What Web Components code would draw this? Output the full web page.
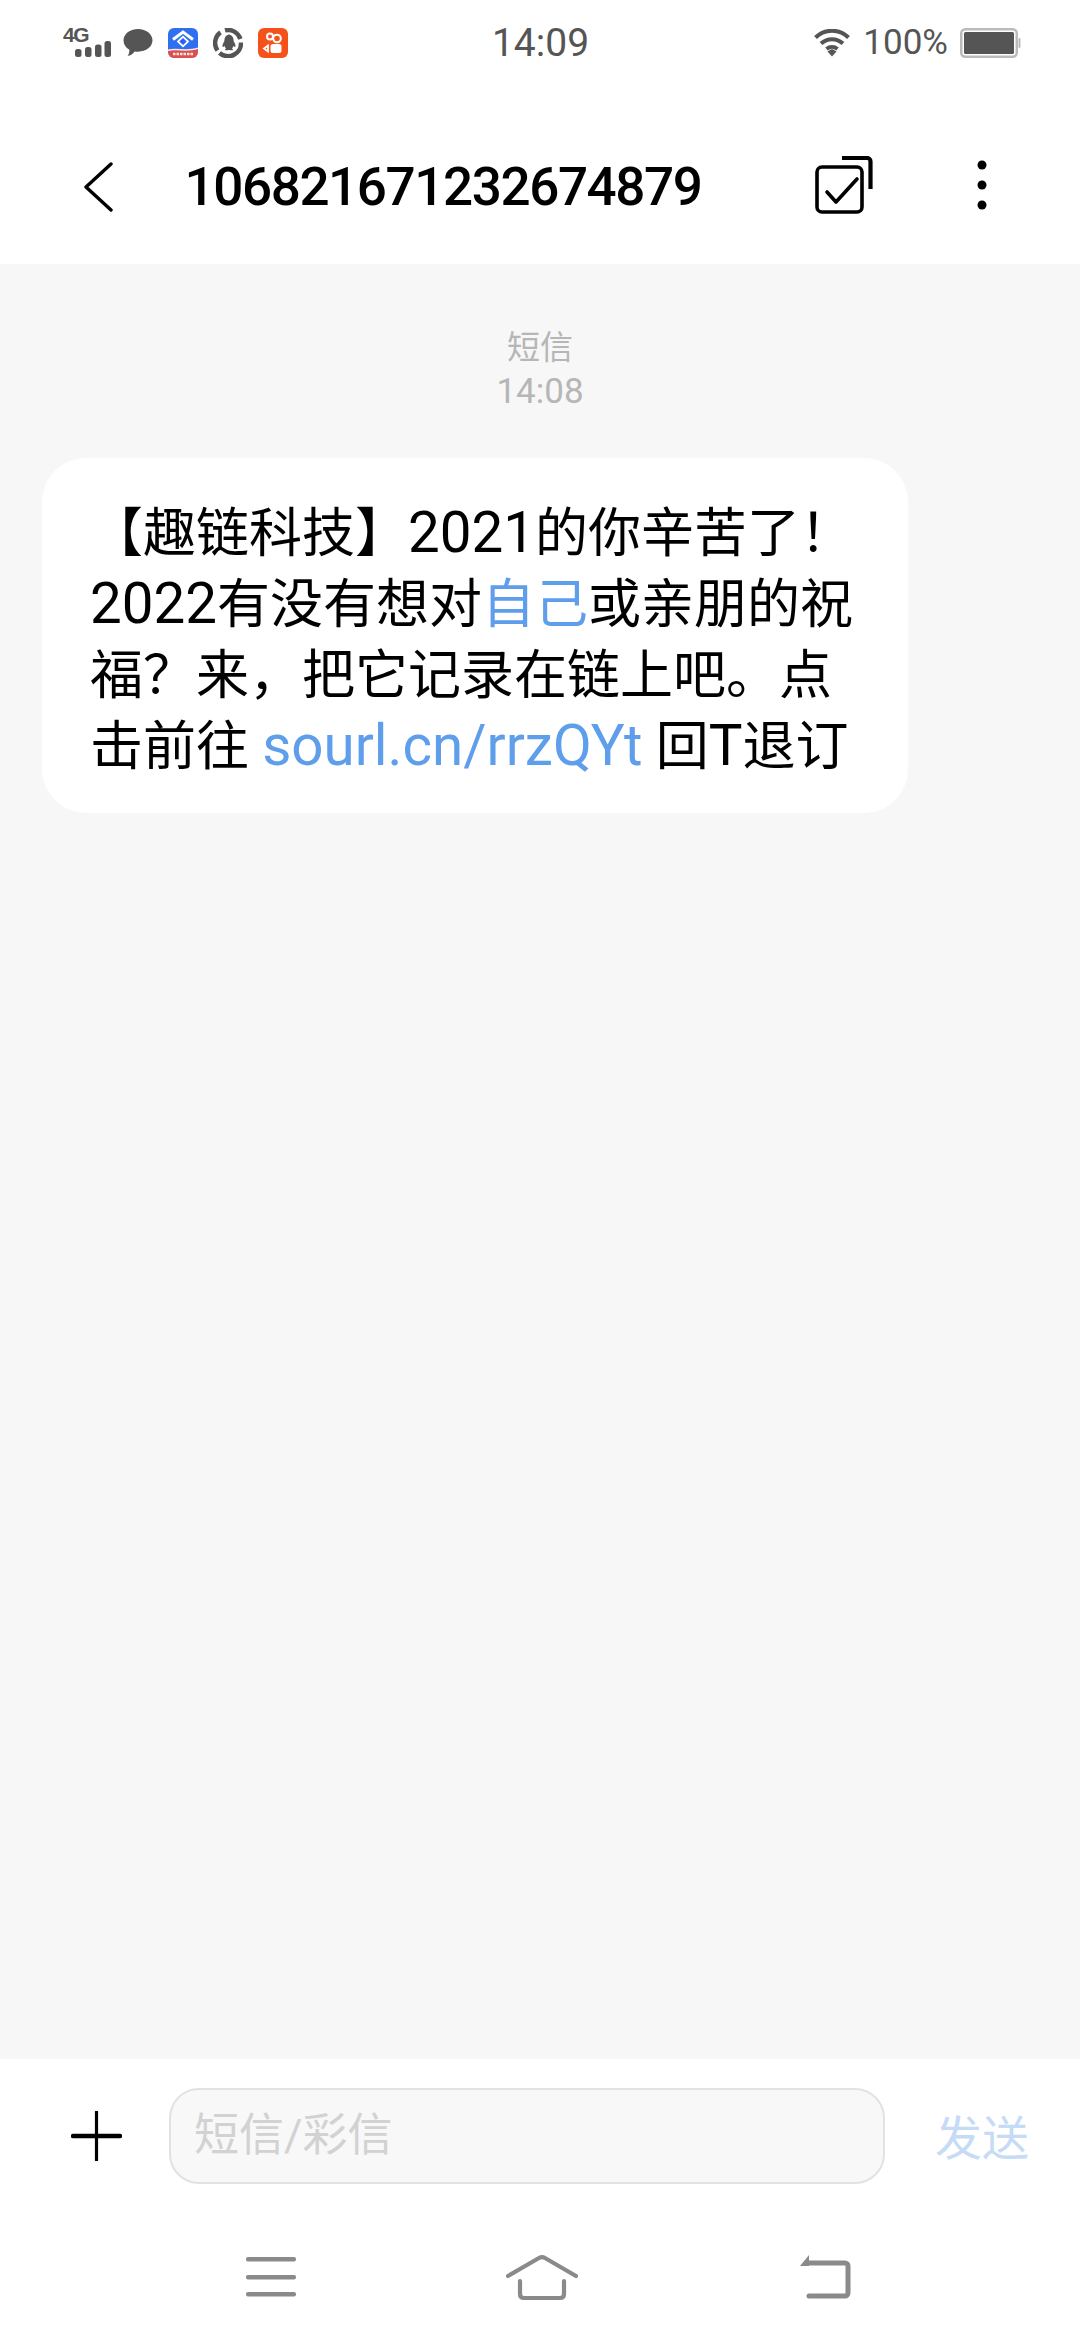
<!DOCTYPE html>
<html lang="zh">
<head>
<meta charset="utf-8">
<title>短信</title>
<style>
html,body{margin:0;padding:0;background:#fff}
body{width:1080px;height:2340px;font-family:Roboto,"Noto Sans CJK SC",sans-serif}
sms-app{height:2340px}
</style>
</head>
<body>
<sms-app>
  <status-bar></status-bar>
  <chat-header number="106821671232674879"></chat-header>
  <message-list>
    <time-stamp kind="短信" time="14:08"></time-stamp>
    <chat-bubble>【趣链科技】<span class="n">2021</span>的你辛苦了&#xFF01;<br><span class="n">2022</span>有没有想对<a>自己</a>或亲朋的祝<br>福&#xFF1F;来&#xFF0C;把它记录在链上吧。点<br>击前往 <a class="n">sourl.cn/rrzQYt</a> 回<span class="n">T</span>退订</chat-bubble>
  </message-list>
  <chat-composer placeholder="短信/彩信" send="发送"></chat-composer>
  <nav-bar></nav-bar>
</sms-app>
<script>
function def(name, html){
  customElements.define(name, class extends HTMLElement{
    constructor(){super();this.attachShadow({mode:'open'});}
    connectedCallback(){
      this.shadowRoot.innerHTML = typeof html==='function'?html(this):html;
    }
  });
}
const CJK='Roboto,"Noto Sans CJK SC",sans-serif';

def('sms-app',`<style>:host{display:flex;flex-direction:column;width:1080px;background:#fff}</style><slot></slot>`);

def('status-bar',`<style>
:host{display:grid;grid-template-columns:1fr auto 1fr;align-items:center;height:84px;padding:0 59px 0 63px;box-sizing:border-box;color:#555;font-family:${CJK}}
.l,.r{display:flex;align-items:center}
.l{gap:15px}
.r{justify-content:flex-end}
svg{display:block;flex:none}
.time{font-size:39px;line-height:86px;margin-left:-3px}
.pct{font-size:35px;margin:0 12px 0 13px;line-height:40px}
.net{position:relative;width:45px;height:32px}
.net b{position:absolute;left:0;top:-2px;font:700 21px/20px "Liberation Sans",sans-serif;letter-spacing:-1.500px}
.net svg{position:absolute;left:12px;top:14px}
</style>
<div class="l">
  <div class="net"><b>4G</b>
    <svg width="36" height="16" viewBox="0 0 36 16" fill="#555"><rect x="0" y="8" width="6.500" height="8" rx="2.500"/><rect x="10" y="6" width="6.500" height="10" rx="2.500"/><rect x="20" y="3.500" width="6.500" height="12.500" rx="2.500"/><rect x="29.500" y="0" width="6.500" height="16" rx="2.500"/></svg>
  </div>
  <svg width="30" height="29" viewBox="0 0 31 30" style="margin-top:-1px"><path fill="#555" d="M15.5 1C24 1 30.5 6.200 30.500 12.800 30.500 19.400 24 24.500 15.500 24.500 14.300 24.500 13.200 24.400 12.100 24.200 10.500 26.500 7.800 28.500 4.800 28.800 6.100 27.200 6.700 25.200 6.600 22.600 2.800 20.500.500 17 .500 12.800.500 6.200 7 1 15.500 1Z"/></svg>
  <svg width="30" height="30" viewBox="0 0 30 30">
    <defs><clipPath id="c"><rect width="30" height="30" rx="6"/></clipPath></defs>
    <g clip-path="url(#c)"><rect width="30" height="30" fill="#2f6ff0"/>
    <path d="M0 21.500C8 19.500 20 23 30 19.500V30H0Z" fill="#fbe9e6"/>
    <path d="M0 23C8 21 20 24.500 30 21V30H0Z" fill="#d95050"/>
    <path d="M5 26H25" stroke="#fbe3e0" stroke-width="2.500" stroke-dasharray="2.500 1"/>
    <path d="M5 11.500 15 4l10 7.500" fill="none" stroke="#fff" stroke-width="3"/>
    <path d="M15 7.500l6.300 6L15 19.500l-6.300-6Z" fill="#fff"/>
    <path d="M15 10l3.700 3.500L15 17l-3.700-3.500Z" fill="#2a5ef5"/></g>
  </svg>
  <svg width="30" height="30" viewBox="0 0 30 30" fill="none" stroke="#555" stroke-width="4.500">
    <path d="M12 2.300A13 13 0 0 1 27.400 11"/>
    <path d="M28 14.500A13 13 0 0 1 6.500 25"/>
    <path d="M4.500 22.500A13 13 0 0 1 7.500 4.400"/>
    <path stroke="none" fill="#555" d="M15 6.500c3.700 0 5.500 2.600 5.500 5.500 0 .9.400 1.700 1 2.700 1 1.700 1.300 3.400.8 4.100-.5.400-1.100-.1-1.700-1.100-.3 1.100-.9 2-1.700 2.700.9.400 1.200.9 1.100 1.300-.2.500-1.900.8-3.300.4-.5-.1-.9-.1-1.400 0-1.400.4-3.100.1-3.300-.4-.1-.4.200-.9 1.100-1.300-.8-.7-1.400-1.600-1.700-2.700-.6 1-1.200 1.500-1.700 1.100-.5-.7-.2-2.400.8-4.100.6-1 1-1.800 1-2.700 0-2.900 1.800-5.500 5.500-5.500Z"/>
  </svg>
  <svg width="30" height="30" viewBox="0 0 30 30">
    <rect width="30" height="30" rx="6" fill="#f5521b"/>
    <g fill="none" stroke="#fff" stroke-width="2">
      <circle cx="12" cy="8.500" r="3"/><circle cx="19" cy="10.500" r="3.800"/>
      <rect x="12.500" y="16" width="11" height="9" rx="2.500" fill="#fff" stroke="none"/>
      <path d="M10 17.500 6 20.500l4 3Z" stroke-width="1.800"/>
    </g>
  </svg>
</div>
<div class="time">14:09</div>
<div class="r">
  <svg width="36" height="28" viewBox="0 0 36 28" fill="none" stroke="#555" stroke-width="4">
    <path d="M1.500 8.500C11 -.5 25-.5 34.500 8.500"/><path d="M7 14.500c6.500-5.800 15.500-5.800 22 0"/><path d="M12.500 20c3.300-2.700 7.700-2.700 11 0"/>
    <path d="M13.500 22.500 18 20l4.500 2.500L18 27.500Z" fill="#555" stroke="none"/>
  </svg>
  <span class="pct">100%</span>
  <svg width="61" height="30" viewBox="0 0 61 30"><rect x="1.250" y="1.250" width="55.500" height="27.500" rx="4" fill="none" stroke="#bbb" stroke-width="2.500"/><rect x="4" y="4" width="50" height="22" rx="1.500" fill="#555"/><rect x="58.500" y="10" width="2" height="10" rx="1" fill="#bbb"/></svg>
</div>`);

def('chat-header',el=>`<style>
:host{display:flex;align-items:center;height:180px;box-sizing:border-box;padding:25px 0 0 0;background:#fff;font-family:${CJK}}
.bk{margin-left:82.500px;flex:none}
.t{margin-left:71px;flex:1;font-size:53px;font-weight:500;color:#000;letter-spacing:-1.400px;line-height:60px}
.sel{flex:none;margin-right:104px;margin-top:-3px}
.more{flex:none;margin-right:93px;margin-top:-3px}
svg{display:block}
</style>
<svg class="bk" width="31" height="50" viewBox="0 0 31 50" fill="none" stroke="#000" stroke-width="3.400" stroke-linecap="round" stroke-linejoin="round"><path d="M28 2 3 25l25 23"/></svg>
<div class="t">${el.getAttribute('number')}</div>
<svg class="sel" width="58" height="58" viewBox="0 0 58 58" fill="none" stroke="#000"><rect x="2" y="11" width="45" height="45" rx="5" stroke-width="3.600"/><path d="M27 2h25a3.500 3.500 0 0 1 3.500 3.500V33" stroke-width="4.200"/><path d="M12 36l9 10 21-23" stroke-width="3.600" stroke-linecap="round" stroke-linejoin="round"/></svg>
<svg class="more" width="10" height="50" viewBox="0 0 10 50" fill="#000"><circle cx="5" cy="5" r="4.500"/><circle cx="5" cy="25" r="4.500"/><circle cx="5" cy="45" r="4.500"/></svg>`);

def('message-list',`<style>:host{display:flex;flex-direction:column;flex:1;background:#f7f7f7;padding:62px 0 0;box-sizing:border-box}</style><slot></slot>`);

def('time-stamp',el=>`<style>:host{display:flex;flex-direction:column;align-items:center;color:#b6b6b6;line-height:44px;font-family:${CJK}}.k{font-size:33px}.v{font-size:35px}</style><div class="k">${el.getAttribute('kind')}</div><div class="v">${el.getAttribute('time')}</div>`);

def('chat-bubble',`<style>
:host{display:block;box-sizing:border-box;width:866px;margin:44px 0 0 42px;padding:41px 0 30px 48px;background:#fff;border-radius:44px;color:#000;font:400 53px/71px ${CJK};white-space:nowrap}
::slotted(a){color:#5f9eea}
::slotted(.n){font-size:56.5px;line-height:1}
</style><slot></slot>`);

def('chat-composer',el=>`<style>
:host{display:flex;align-items:center;background:#fff;height:153px;box-sizing:border-box;padding:0 0 0 71px;font-family:${CJK}}
svg{display:block;flex:none}
.i{flex:none;box-sizing:border-box;width:716px;height:96px;margin-left:47px;border:2px solid #e2e2e2;border-radius:30px;background:#f8f8f8;color:#d2d2d2;font-size:45px;line-height:92px;padding-left:23px}
.s{margin-left:50px;color:#c5dbf6;font-size:47px;margin-top:-3px}
</style>
<svg width="51" height="50" viewBox="0 0 51 50"><path d="M25.500 1V49" stroke="#000" stroke-width="3.200" stroke-linecap="round"/><path d="M2 25H49" stroke="#000" stroke-width="4.400" stroke-linecap="round"/></svg>
<div class="i">${el.getAttribute('placeholder')}</div>
<div class="s">${el.getAttribute('send')}</div>`);

def('nav-bar',`<style>
:host{display:flex;background:#fff;height:128px;box-sizing:border-box;padding:43px 0 0 246px;align-items:flex-start}
svg{display:block;flex:none}
</style>
<svg width="50" height="44" viewBox="0 0 50 44" fill="#8a8a8a" style="margin-top:2px"><rect y="0" width="50" height="4.500" rx="2"/><rect y="18" width="50" height="4.500" rx="2"/><rect y="35" width="50" height="4.500" rx="2"/></svg>
<svg width="72" height="46" viewBox="0 0 72 46" fill="none" stroke="#8a8a8a" stroke-width="4.200" stroke-linejoin="round" stroke-linecap="round" style="margin-left:210px"><path d="M2 21 33 3a6 6 0 0 1 6 0L70 21"/><path d="M14 26v13q0 4 4 4h36q4 0 4-4V26"/></svg>
<svg width="52" height="44" viewBox="0 0 52 44" fill="none" style="margin-left:221px"><path d="M9 8h37a3 3 0 0 1 3 3v27a3 3 0 0 1-3 3H10" stroke="#8a8a8a" stroke-width="5" stroke-linecap="round"/><path d="M10 0v11H1Z" fill="#8a8a8a"/></svg>`);
</script>
</body>
</html>
